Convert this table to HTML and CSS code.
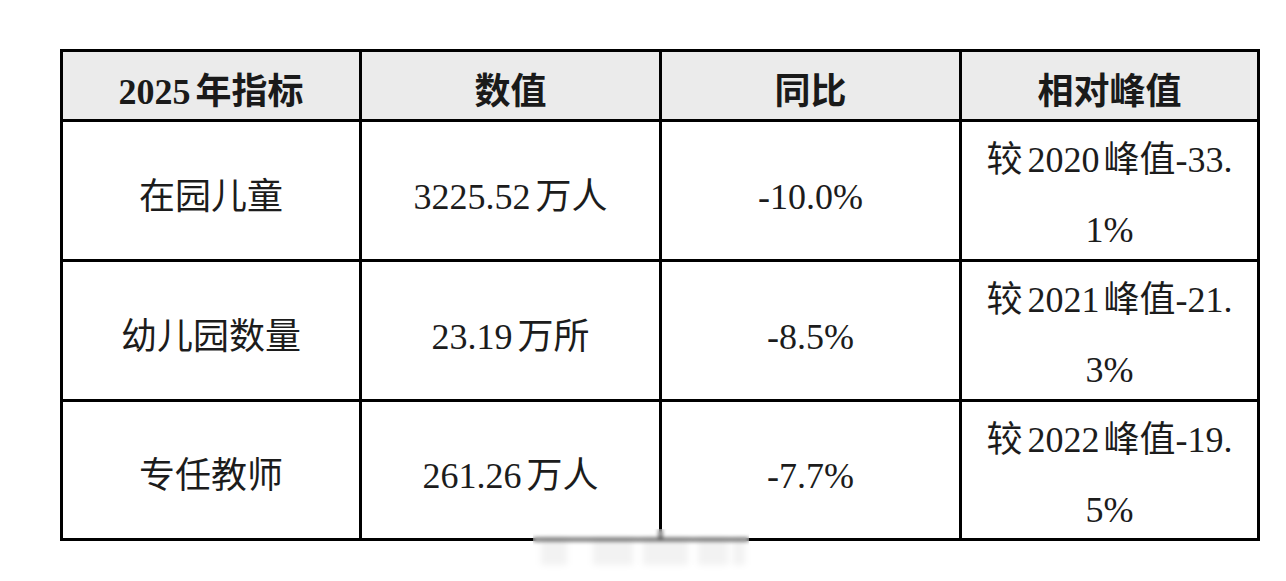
FILE: index.html
```html
<!DOCTYPE html>
<html lang="zh-CN">
<head>
<meta charset="utf-8">
<title>2025年指标</title>
<link rel="stylesheet" href="styles.css">
</head>
<body>
<div class="page">
  <div class="table">
    <div class="cell head"><span class="n r">2025</span>年指标</div>
    <div class="cell head">数值</div>
    <div class="cell head">同比</div>
    <div class="cell head">相对峰值</div>

    <div class="cell">在园儿童</div>
    <div class="cell"><span class="n r">3225.52</span>万人</div>
    <div class="cell">-10.0%</div>
    <div class="cell wrap">较<span class="n lr">2020</span>峰值-33.1%</div>

    <div class="cell">幼儿园数量</div>
    <div class="cell"><span class="n r">23.19</span>万所</div>
    <div class="cell">-8.5%</div>
    <div class="cell wrap">较<span class="n lr">2021</span>峰值-21.3%</div>

    <div class="cell">专任教师</div>
    <div class="cell"><span class="n r">261.26</span>万人</div>
    <div class="cell">-7.7%</div>
    <div class="cell wrap">较<span class="n lr">2022</span>峰值-19.5%</div>
  </div>
  <div class="watermark">
    <span class="wm-bar wm-b1"></span>
    <span class="wm-bar wm-b2"></span>
    <span class="wm-bar wm-b3"></span>
    <span class="wm-bar wm-b4"></span>
    <span class="wm-bar wm-b5"></span>
  </div>
</div>
</body>
</html>
```

FILE: styles.css
```css
* { box-sizing: border-box; }
html, body {
  margin: 0;
  padding: 0;
  background: #ffffff;
}
.page {
  position: relative;
  width: 1286px;
  height: 581px;
  padding: 49px 0 0 60px;
  font-family: "Liberation Serif", "Noto Sans CJK SC", sans-serif;
  color: #1c1c1c;
}
.table {
  width: 1200px;
  display: grid;
  grid-template-columns: 299px 300px 300px 298px;
  grid-template-rows: 70px 140px 140px 139px;
  border-left: 3px solid #000;
  border-top: 3px solid #000;
}
.cell {
  border-right: 3px solid #000;
  border-bottom: 3px solid #000;
  display: flex;
  align-items: center;
  justify-content: center;
  text-align: center;
  font-size: 36px;
  line-height: 70px;
  padding: 12px 24px 0;
}
.cell.wrap {
  display: block;
  padding: 0 24px 0;
  line-height: 70px;
  padding-top: 3px;
}
.head {
  background: #ebebeb;
  font-weight: 700;
  color: #1a1a1a;
}
.wrap {
  word-break: break-all;
}
.n.r { margin-right: 5px; }
.n.lr { margin: 0 4px 0 5px; }
.watermark {
  position: absolute;
  left: 533px;
  top: 529px;
  width: 216px;
  height: 40px;
  backdrop-filter: blur(2px);
  background: rgba(255, 255, 255, 0.25);
}
.wm-bar {
  position: absolute;
  top: 10px;
  height: 26px;
  background: rgba(0, 0, 0, 0.05);
  filter: blur(3px);
}
.wm-b1 { left: 8px; width: 26px; }
.wm-b2 { left: 60px; width: 40px; }
.wm-b3 { left: 110px; width: 45px; }
.wm-b4 { left: 165px; width: 30px; }
.wm-b5 { left: 200px; width: 12px; }
```
